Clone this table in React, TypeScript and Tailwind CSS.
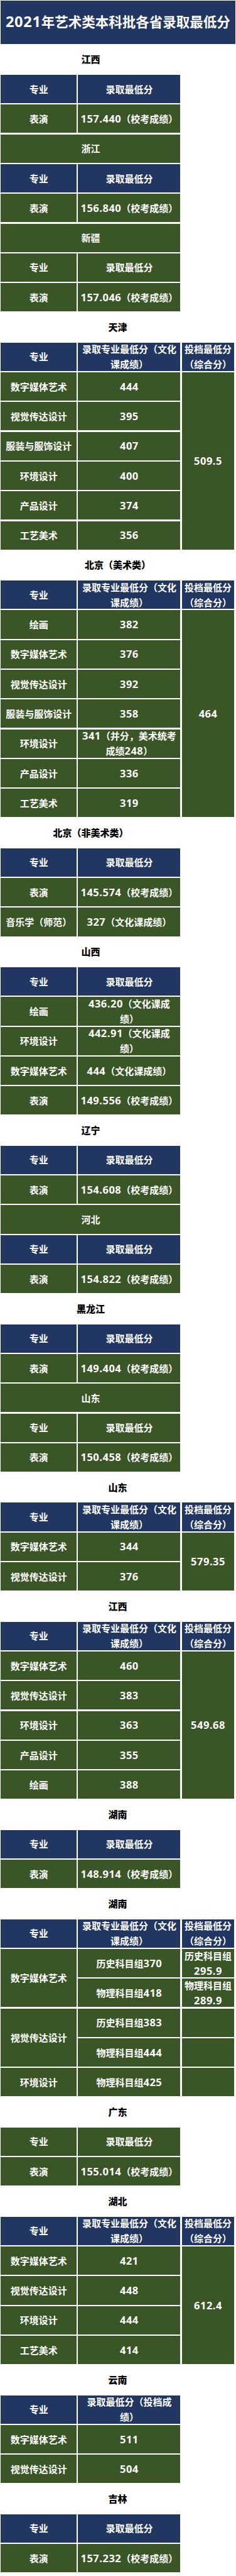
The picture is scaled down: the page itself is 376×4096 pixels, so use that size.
import React from "react";

const NAVY = "bg-[#213660]";
const GREEN = "bg-[#3a5526]";

function T({ s }: { s: string }) {
  const parts = s.split(/([\x21-\x7e]+)/);
  return (
    <>
      {parts.map((p, i) =>
        /^[\x21-\x7e]+$/.test(p) ? (
          <span key={i} className="font-['Open_Sans',sans-serif] text-[1.1em] tracking-[0.03em]">
            {p}
          </span>
        ) : (
          <React.Fragment key={i}>{p}</React.Fragment>
        )
      )}
    </>
  );
}

function C({ s = "", navy = false, span = "" }: { s?: string; navy?: boolean; span?: string }) {
  const lines = s ? s.split("\n") : [];
  return (
    <div
      className={`flex flex-col items-center justify-center whitespace-nowrap text-center text-[15px] leading-[23.9px] font-bold text-white ${
        navy ? NAVY : GREEN
      } ${span}`}
    >
      {lines.map((l, i) => (
        <span key={i} className="block h-[23.9px] shrink-0">
          <T s={l} />
        </span>
      ))}
    </div>
  );
}

function G2({ children }: { children: React.ReactNode }) {
  return (
    <div className="ml-[1.43px] grid w-[286.05px] auto-rows-[45.17px] grid-cols-[120.81px_163.12px] gap-[2.15px]">
      {children}
    </div>
  );
}

function G3({ children }: { children: React.ReactNode }) {
  return (
    <div className="ml-[1.43px] grid w-[372.12px] auto-rows-[45.17px] grid-cols-[120.81px_163.12px_83.89px] gap-[2.15px]">
      {children}
    </div>
  );
}

function H({ t, wide = false }: { t: string; wide?: boolean }) {
  return (
    <div
      className={`ml-[1.43px] flex h-[49.47px] items-center justify-center text-[15px] font-black text-black ${
        wide ? "w-[372.12px]" : "w-[286.05px]"
      }`}
    >
      {t}
    </div>
  );
}

function Head2({ navy = true, right = "录取最低分" }: { navy?: boolean; right?: string }) {
  return (
    <>
      <C s="专业" navy={navy} />
      <C s={right} navy={navy} />
    </>
  );
}

function Head3() {
  return (
    <>
      <C s="专业" navy />
      <C s={"录取专业最低分（文化\n课成绩）"} navy />
      <C s={"投档最低分\n（综合分）"} navy />
    </>
  );
}

function R({ a, b }: { a: string; b: string }) {
  return (
    <>
      <C s={a} />
      <C s={b} />
    </>
  );
}

export default function App() {
  return (
    <div className="w-[376px] bg-white pb-[1.43px] pt-[0.72px] font-['Noto_Sans_CJK_SC','Noto_Sans',sans-serif]">
      <div className={`ml-[0.72px] flex h-[68.83px] w-[374.3px] items-center justify-center text-[21.5px] font-bold text-white ${NAVY}`}>
        <span>
          <T s="2021年艺术类本科批各省录取最低分" />
        </span>
      </div>

      <H t="江西" />
      <G2>
        <Head2 />
        <R a="表演" b="157.440（校考成绩）" />
        <C s="浙江" span="col-span-2" />
        <Head2 />
        <R a="表演" b="156.840（校考成绩）" />
        <C s="新疆" span="col-span-2" />
        <Head2 navy={false} />
        <R a="表演" b="157.046（校考成绩）" />
      </G2>

      <H t="天津" wide />
      <G3>
        <Head3 />
        <R a="数字媒体艺术" b="444" />
        <C s="509.5" span="row-span-6" />
        <R a="视觉传达设计" b="395" />
        <R a="服装与服饰设计" b="407" />
        <R a="环境设计" b="400" />
        <R a="产品设计" b="374" />
        <R a="工艺美术" b="356" />
      </G3>

      <H t="北京（美术类）" wide />
      <G3>
        <Head3 />
        <R a="绘画" b="382" />
        <C s="464" span="row-span-7" />
        <R a="数字媒体艺术" b="376" />
        <R a="视觉传达设计" b="392" />
        <R a="服装与服饰设计" b="358" />
        <R a="环境设计" b={"341（并分，美术统考\n成绩248）"} />
        <R a="产品设计" b="336" />
        <R a="工艺美术" b="319" />
      </G3>

      <H t="北京（非美术类）" />
      <G2>
        <Head2 />
        <R a="表演" b="145.574（校考成绩）" />
        <R a="音乐学（师范）" b="327（文化课成绩）" />
      </G2>

      <H t="山西" />
      <G2>
        <Head2 />
        <R a="绘画" b={"436.20（文化课成\n绩）"} />
        <R a="环境设计" b={"442.91（文化课成\n绩）"} />
        <R a="数字媒体艺术" b="444（文化课成绩）" />
        <R a="表演" b="149.556（校考成绩）" />
      </G2>

      <H t="辽宁" />
      <G2>
        <Head2 />
        <R a="表演" b="154.608（校考成绩）" />
        <C s="河北" span="col-span-2" />
        <Head2 />
        <R a="表演" b="154.822（校考成绩）" />
      </G2>

      <H t="黑龙江" />
      <G2>
        <Head2 />
        <R a="表演" b="149.404（校考成绩）" />
        <C s="山东" span="col-span-2" />
        <Head2 navy={false} />
        <R a="表演" b="150.458（校考成绩）" />
      </G2>

      <H t="山东" wide />
      <G3>
        <Head3 />
        <R a="数字媒体艺术" b="344" />
        <C s="579.35" span="row-span-2" />
        <R a="视觉传达设计" b="376" />
      </G3>

      <H t="江西" wide />
      <G3>
        <Head3 />
        <R a="数字媒体艺术" b="460" />
        <C s="549.68" span="row-span-5" />
        <R a="视觉传达设计" b="383" />
        <R a="环境设计" b="363" />
        <R a="产品设计" b="355" />
        <R a="绘画" b="388" />
      </G3>

      <H t="湖南" wide />
      <G2>
        <Head2 />
        <R a="表演" b="148.914（校考成绩）" />
      </G2>

      <H t="湖南" wide />
      <G3>
        <Head3 />
        <C s="数字媒体艺术" span="row-span-2" />
        <C s="历史科目组370" />
        <C s={"历史科目组\n295.9"} />
        <C s="物理科目组418" />
        <C s={"物理科目组\n289.9"} />
        <C s="视觉传达设计" span="row-span-2" />
        <C s="历史科目组383" />
        <C />
        <C s="物理科目组444" />
        <C />
        <C s="环境设计" />
        <C s="物理科目组425" />
        <C />
      </G3>

      <H t="广东" wide />
      <G2>
        <Head2 navy={false} />
        <R a="表演" b="155.014（校考成绩）" />
      </G2>

      <H t="湖北" wide />
      <G3>
        <Head3 />
        <R a="数字媒体艺术" b="421" />
        <C s="612.4" span="row-span-4" />
        <R a="视觉传达设计" b="448" />
        <R a="环境设计" b="444" />
        <R a="工艺美术" b="414" />
      </G3>

      <H t="云南" wide />
      <G2>
        <Head2 right={"录取最低分（投档成\n绩）"} />
        <R a="数字媒体艺术" b="511" />
        <R a="视觉传达设计" b="504" />
      </G2>

      <H t="吉林" wide />
      <G2>
        <Head2 />
        <R a="表演" b="157.232（校考成绩）" />
      </G2>
    </div>
  );
}
